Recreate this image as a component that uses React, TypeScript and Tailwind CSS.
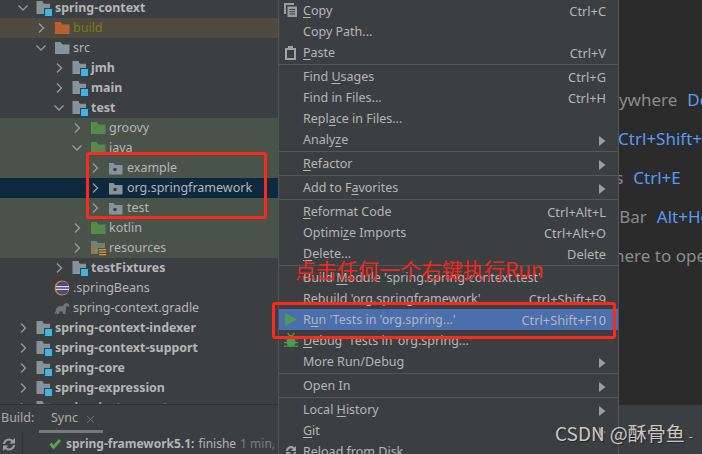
import React from "react";

const uiFont = { fontFamily: '"Noto Sans", "Open Sans", sans-serif' };

function Chevron({ open, show = true }: { open?: boolean; show?: boolean }) {
  return (
    <svg width="16" height="16" viewBox="0 0 16 16" className="shrink-0" fill="none" stroke={show ? "#9a9c9e" : "none"} strokeWidth="1.3">
      {open ? <path d="M3.5 5.5 8 10l4.5-4.5" /> : <path d="M6 3.5 10.5 8 6 12.5" />}
    </svg>
  );
}

function Folder({ color }: { color: string }) {
  return <path d="M1 2h5.5l2 2.5H15.500V14H1z" fill={color} />;
}

function Icon({ kind }: { kind: string }) {
  let body: React.ReactNode = null;
  if (kind === "module") {
    body = (
      <>
        <path d="M0.500 1h6l1 2.500H14V14H.5z" fill="#87939a" />
        <path d="M7.500 1.500h6.500v2H8.500z" fill="#3c3f41" />
        <rect x="9" y="9" width="7" height="7" fill="#3fb4e6" />
        <rect x="8" y="8" width="1" height="8" fill="#3c3f41" />
        <rect x="8" y="8" width="8" height="1" fill="#3c3f41" />
      </>
    );
  } else if (kind === "plain") body = <Folder color="#87939a" />;
  else if (kind === "orange") body = <Folder color="#b9602f" />;
  else if (kind === "green") body = <Folder color="#57894a" />;
  else if (kind === "pkg") {
    body = (
      <>
        <path d="M1 3h4.500l1.500 2h7.500v9.500H1z" fill="#87939a" />
        <circle cx="7" cy="9.500" r="1.800" fill={"#3c3f41"} />
      </>
    );
  } else if (kind === "res") {
    body = (
      <>
        <path d="M1 1h5.500l1.500 2h7v5H8v6H1z" fill="#77806f" />
        <path d="M4 7v6l-3.500-3z" fill="#d9622b" />
        <path d="M5 7v6l3.500-3z" fill="#57a64a" />
        <path d="M9 9h7v1.300H9zM9 11.500h7v1.300H9zM9 14h7v1.300H9z" fill="#e3952b" />
      </>
    );
  } else if (kind === "eclipse") {
    body = (
      <>
        <circle cx="8" cy="8" r="7.500" fill="#c9853a" />
        <circle cx="8.500" cy="8" r="6.500" fill="#4f4a80" />
        <path d="M2 6h13v1.300H2zM2 8.700h13V10H2z" fill="#d8d8e4" />
      </>
    );
  } else if (kind === "gradle") {
    body = (
      <path
        d="M1 14l1-5c1-2.500 4-3.500 7-3 .8-2 2.500-3.500 4-3 1.500.4 2.500 2 2.500 3.500l-1 .8c-.5-1-1.200-1.500-2-1-.6.5-.5 2-.5 3l-.5 4.700h-2.500L8.500 11.500H5.500L5 14H3l-.300-2.500L2.500 14z"
        fill="#6f7678"
      />
    );
  }
  return (
    <svg width="16" height="16" viewBox="0 0 16 16" className="shrink-0">
      {body}
    </svg>
  );
}

type Row = {
  d: number;
  t: string;
  icon: string;
  open?: boolean;
  noChev?: boolean;
  bold?: boolean;
  bg?: string;
  color?: string;
};

const TINT = "bg-[#49534a]";
const rows: Row[] = [
  { d: 0, t: "spring-context", icon: "module", open: true, bold: true },
  { d: 1, t: "build", icon: "orange", bg: "bg-[#4e4a40]", color: "text-[#7c7c12]" },
  { d: 1, t: "src", icon: "plain", open: true },
  { d: 2, t: "jmh", icon: "module", bold: true },
  { d: 2, t: "main", icon: "module", bold: true },
  { d: 2, t: "test", icon: "module", open: true, bold: true },
  { d: 3, t: "groovy", icon: "green", bg: TINT },
  { d: 3, t: "java", icon: "green", open: true, bg: TINT },
  { d: 4, t: "example", icon: "pkg", bg: TINT },
  { d: 4, t: "org.springframework", icon: "pkg", bg: "bg-[#0d293e]" },
  { d: 4, t: "test", icon: "pkg", bg: TINT },
  { d: 3, t: "kotlin", icon: "green", bg: TINT },
  { d: 3, t: "resources", icon: "res", bg: TINT },
  { d: 2, t: "testFixtures", icon: "module", bold: true },
  { d: 1, t: ".springBeans", icon: "eclipse", noChev: true },
  { d: 1, t: "spring-context.gradle", icon: "gradle", noChev: true },
  { d: 0, t: "spring-context-indexer", icon: "module", bold: true },
  { d: 0, t: "spring-context-support", icon: "module", bold: true },
  { d: 0, t: "spring-core", icon: "module", bold: true },
  { d: 0, t: "spring-expression", icon: "module", bold: true },
  { d: 0, t: "spring-instrument", icon: "module", bold: true },
];

const paddings = ["pl-[15px]", "pl-[33px]", "pl-[51px]", "pl-[69px]", "pl-[87px]"];

function TreeRow({ r }: { r: Row }) {
  return (
    <div className={`h-5 flex items-center whitespace-nowrap ${paddings[r.d]} ${r.bg ?? ""} ${r.color ?? "text-[#b4b6b8]"} ${r.bold ? "font-bold text-[12.4px]" : "text-[12.5px]"}`}>
      <Chevron open={r.open} show={!r.noChev} />
      <span className="w-[5px] shrink-0" />
      <Icon kind={r.icon} />
      <span className="ml-[3px]">{r.t}</span>
    </div>
  );
}

function Label({ text }: { text: string }) {
  const i = text.indexOf("&");
  if (i < 0) return <span>{text}</span>;
  return (
    <span>
      {text.slice(0, i)}
      <span className="underline underline-offset-2">{text[i + 1]}</span>
      {text.slice(i + 2)}
    </span>
  );
}

function MenuIcon({ kind }: { kind?: string }) {
  if (!kind) return null;
  let body: React.ReactNode = null;
  if (kind === "copy")
    body = (
      <>
        <path d="M0 1h2v10h-2zM0 0h10v2H0z" fill="#9a9d9f" />
        <path d="M3.500 3.500h9.500V14H3.500z" fill="#9a9d9f" />
        <path d="M5.500 6h5.500v1H5.500zM5.500 8.300h5.500v1H5.500zM5.500 10.600h5.500v1H5.500z" fill="#3c3f41" />
      </>
    );
  if (kind === "paste")
    body = (
      <path
        fillRule="evenodd"
        d="M1 3h3V1h5v2h3v12H1zM3 5v8h7V5z"
        fill="#a0a3a5"
      />
    );
  if (kind === "run") body = <path d="M1 1l12 6.500L1 14z" fill="#499c54" />;
  if (kind === "bug")
    body = (
      <>
        <ellipse cx="7" cy="9" rx="4.500" ry="5" fill="#499c54" />
        <path d="M0 5h14v1.300H0zM0 9h14v1.300H0zM0 12.500h14v1.300H0zM3 0l2 3 4 0 2-3-1.500 0L8 2H6L4.500 0z" fill="#499c54" />
      </>
    );
  if (kind === "reload")
    body = (
      <path
        d="M2 7a5 5 0 0 1 8.500-3.500L12 2v5H7l2-2a3 3 0 0 0-5 2zM12 8a5 5 0 0 1-8.500 3.500L2 13V8h5l-2 2a3 3 0 0 0 5-2z"
        fill="#a0a3a5"
      />
    );
  return (
    <svg width="14" height="15" viewBox="0 0 14 15" className="absolute left-[5px] top-[3px]">
      {body}
    </svg>
  );
}

type Item =
  | { sep: true }
  | { sep?: false; label: string; key2?: string; sub?: boolean; icon?: string; active?: boolean };

const items: Item[] = [
  { label: "&Copy", key2: "Ctrl+C", icon: "copy" },
  { label: "Copy Path..." },
  { label: "&Paste", key2: "Ctrl+V", icon: "paste" },
  { sep: true },
  { label: "Find &Usages", key2: "Ctrl+G" },
  { label: "Find in Files...", key2: "Ctrl+H" },
  { label: "Repl&ace in Files..." },
  { label: "Analy&ze", sub: true },
  { sep: true },
  { label: "&Refactor", sub: true },
  { sep: true },
  { label: "Add to F&avorites", sub: true },
  { sep: true },
  { label: "&Reformat Code", key2: "Ctrl+Alt+L" },
  { label: "Optimi&ze Imports", key2: "Ctrl+Alt+O" },
  { label: "&Delete...", key2: "Delete" },
  { sep: true },
  { label: "Build &Module 'spring.spring-context.test'" },
  { label: "Rebuild 'org.springframework'", key2: "Ctrl+Shift+F9" },
  { label: "R&un 'Tests in 'org.spring...'", key2: "Ctrl+Shift+F10", icon: "run", active: true },
  { label: "&Debug 'Tests in 'org.spring...'", icon: "bug" },
  { label: "More Run/Debug", sub: true },
  { sep: true },
  { label: "Open In", sub: true },
  { sep: true },
  { label: "Local &History", sub: true },
  { label: "&Git", sub: true },
  { label: "Reload from Disk", icon: "reload" },
];

function MenuItem({ item }: { item: Item }) {
  if (item.sep) {
    return (
      <div className="h-[3px] pt-px shrink-0">
        <div className="h-px bg-[#515658]" />
      </div>
    );
  }
  return (
    <div className={`relative h-[21px] shrink-0 flex items-center justify-between pl-6 pr-3 pt-[2px] whitespace-nowrap text-[12.5px] ${item.active ? "bg-[#4b6eaf]" : ""} text-[#b4b6b8]`}>
      <MenuIcon kind={item.icon} />
      <Label text={item.label} />
      {item.key2 && <span className="text-[12.8px]">{item.key2}</span>}
      {item.sub && (
        <svg width="7" height="10" viewBox="0 0 7 10">
          <path d="M0 0l6.500 5L0 10z" fill="#9a9d9f" />
        </svg>
      )}
    </div>
  );
}

const hints: { pre: string; key?: string; ml: string }[] = [
  { pre: "Search Everywhere", key: "Double Shift", ml: "ml-[-93px]" },
  { pre: "Go to File", key: "Ctrl+Shift+N", ml: "ml-[-86px]" },
  { pre: "Recent Files", key: "Ctrl+E", ml: "ml-[-90px]" },
  { pre: "Navigation Bar", key: "Alt+Home", ml: "ml-[-91px]" },
  { pre: "Drop files here to open", ml: "ml-[-86px]" },
];

export default function App() {
  return (
    <div className="relative w-[702px] h-[454px] overflow-hidden flex bg-[#3c3f41]" style={uiFont}>
      {/* project + build panel */}
      <div className="w-[278px] h-full flex flex-col shrink-0">
        <div className="h-[404px] overflow-hidden shrink-0">
          <div className="-mt-[2px]">
            {rows.map((r, i) => (
              <TreeRow key={i} r={r} />
            ))}
          </div>
        </div>
        <div className="h-7 border-t border-[#323232] flex text-[12.5px] text-[#a9abad] shrink-0">
          <div className="w-[39px] pl-px pt-1">Build:</div>
          <div className="w-16 h-7 border-b-[3px] border-[#747a80] pl-3 pt-1 flex gap-2 shrink-0">
            <span>Sync</span>
            <svg width="9" height="9" viewBox="0 0 9 9" className="mt-[6px]" stroke="#6b6e70" strokeWidth="1">
              <path d="M1 1l7 7M8 1l-7 7" />
            </svg>
          </div>
        </div>
        <div className="flex-1 flex min-h-0">
          <div className="w-[23px] border-r border-[#323232] pl-[2px] pt-[5px] shrink-0">
            <svg width="14" height="15" viewBox="0 0 14 15">
              <path d="M1 7a6 6 0 0 1 10-4L13 1v5.500H7.500l2-2a4 4 0 0 0-6.500 2.500zM13 8a6 6 0 0 1-10 4L1 14V8.500h5.500l-2 2a4 4 0 0 0 6.500-2.500z" fill="#9a9d9f" />
            </svg>
          </div>
          <div className="flex items-start pl-[26px] pt-[3px] whitespace-nowrap text-[12px] text-[#b4b6b8] overflow-hidden">
            <svg width="12" height="11" viewBox="0 0 12 11" className="mt-[4px] mr-[5px] shrink-0">
              <path d="M.5 5.500l2-2L4.500 6 10 0l2 2-7.500 8.500z" fill="#57a64a" />
            </svg>
            <span className="font-bold">spring-framework5.1:</span>
            <span className="ml-1">finishe</span>
            <span className="ml-1 text-[#7b7e80]">1 min, 1</span>
          </div>
        </div>
      </div>

      {/* context menu */}
      <div className="w-[341px] h-full shrink-0 flex flex-col border-x border-[#515658] overflow-hidden bg-[#3c3f41]">
        {items.map((it, i) => (
          <MenuItem key={i} item={it} />
        ))}
      </div>

      {/* editor */}
      <div className="flex-1 min-w-0 h-full flex flex-col overflow-hidden">
        <div className="flex-1 bg-[#2b2b2b] pt-[88px] flex flex-col gap-[15px] overflow-hidden">
          {hints.map((h, i) => (
            <div key={i} className={`h-6 flex items-center whitespace-nowrap text-[17px] text-[#8b8b8b] ${h.ml}`}>
              <span>{h.pre}</span>
              {h.key && <span className="ml-[10px] text-[#589df6]">{h.key}</span>}
            </div>
          ))}
        </div>
        <div className="h-[49px] shrink-0 bg-[#3c3f41]" />
      </div>

      {/* annotations */}
      <div className="absolute left-[86px] top-[152px] w-[181px] h-[67px] border-[3px] border-[#fb2a1c] rounded-[3px]" />
      <div className="absolute left-[272px] top-[302px] w-[344px] h-[37px] border-[3px] border-[#fb2a1c] rounded-[3px]" />
      <div
        className="absolute left-[295px] top-[256px] whitespace-nowrap text-[21px] leading-[27px] text-[#f4261c]"
        style={{ fontFamily: '"Noto Sans CJK SC", sans-serif' }}
      >
        点击任何一个右键执行Run
      </div>
      <div
        className="absolute left-[555px] top-[420px] whitespace-nowrap text-[19px] leading-[26px] text-[#c9c9c9]"
        style={{ fontFamily: '"Noto Sans CJK SC", sans-serif', textShadow: "1px 1px 1px #222" }}
      >
        <span>CSDN</span>
        <span className="ml-[5px]">@酥骨鱼</span>
        <span className="ml-[4px] text-[12px]">-</span>
      </div>
    </div>
  );
}
